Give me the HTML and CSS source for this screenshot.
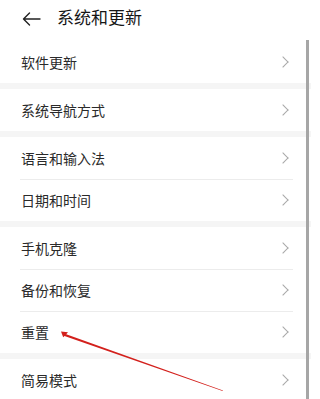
FILE: index.html
```html
<!DOCTYPE html>
<html lang="zh-CN">
<head>
<meta charset="utf-8">
<title>系统和更新</title>
<link rel="stylesheet" href="styles.css">
</head>
<body>
<div class="page">
  <header class="topbar">
    <svg class="back" width="19" height="14" viewBox="0 0 19 14">
      <path d="M18 7H1.5M7.5 1L1.5 7L7.5 13" fill="none" stroke="#222" stroke-width="1.4" stroke-linecap="round" stroke-linejoin="round"/>
    </svg>
    <h1 class="title">系统和更新</h1>
  </header>

  <section class="group">
    <div class="row"><span>软件更新</span><i class="chev"></i></div>
  </section>
  <div class="band"></div>
  <section class="group">
    <div class="row"><span>系统导航方式</span><i class="chev"></i></div>
  </section>
  <div class="band"></div>
  <section class="group">
    <div class="row"><span>语言和输入法</span><i class="chev"></i></div>
    <div class="row"><span>日期和时间</span><i class="chev"></i></div>
  </section>
  <div class="band"></div>
  <section class="group">
    <div class="row"><span>手机克隆</span><i class="chev"></i></div>
    <div class="row"><span>备份和恢复</span><i class="chev"></i></div>
    <div class="row"><span>重置</span><i class="chev"></i></div>
  </section>
  <div class="band"></div>
  <section class="group">
    <div class="row"><span>简易模式</span><i class="chev"></i></div>
  </section>

  <div class="scrollbar"></div>
  <svg class="annot" width="311" height="399" viewBox="0 0 311 399">
    <polygon points="61,331.5 68,332.2 66.2,334.3 223,390.5 222.6,391 64.5,336 63.2,337.2" fill="#d3201c"/>
  </svg>
</div>
</body>
</html>
```

FILE: styles.css
```css
html, body {
  margin: 0;
  padding: 0;
  background: #ffffff;
}

.page {
  position: relative;
  width: 311px;
  height: 399px;
  overflow: hidden;
  font-family: "Noto Sans CJK SC", "Noto Sans", sans-serif;
  color: #222;
}

.topbar {
  height: 41px;
  display: flex;
  align-items: flex-start;
  padding: 0 0 0 22px;
  box-sizing: border-box;
}

.back {
  margin-top: 12px;
  flex: none;
}

.title {
  margin: 5px 0 0 16px;
  font-size: 17px;
  font-weight: 400;
  line-height: 24px;
  color: #161616;
  letter-spacing: 0;
}

.group {
  display: flex;
  flex-direction: column;
}

.row {
  height: 42px;
  display: flex;
  align-items: center;
  justify-content: space-between;
  padding: 0 22px 0 21px;
  font-size: 14px;
  color: #2a2a2a;
  position: relative;
}

.row + .row::before {
  content: "";
  position: absolute;
  left: 20px;
  right: 18px;
  top: -0.5px;
  height: 1px;
  background: #ececec;
}

.chev {
  width: 7px;
  height: 7px;
  border-top: 1px solid #a8a8a8;
  border-right: 1px solid #a8a8a8;
  transform: rotate(45deg);
  margin-right: 2px;
}

.band {
  height: 6px;
  background: #f5f5f5;
}

.scrollbar {
  position: absolute;
  left: 306px;
  top: 40px;
  width: 3px;
  bottom: 0;
  background: #a6a6a6;
}

.annot {
  position: absolute;
  left: 0;
  top: 0;
  pointer-events: none;
}
```
